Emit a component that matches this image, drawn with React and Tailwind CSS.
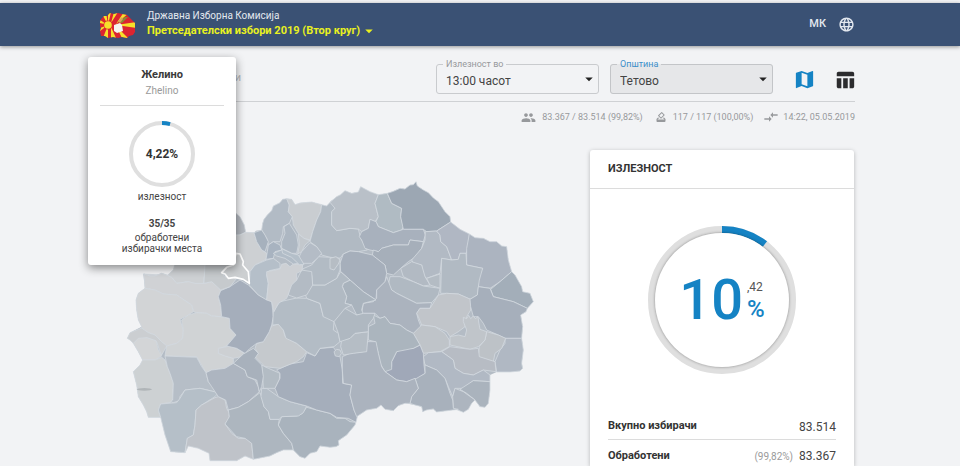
import { MdMap, MdTableChart, MdLanguage, MdPeople, MdHowToVote, MdCompareArrows, MdArrowDropDown } from "react-icons/md";

const OUTLINE =
  "280,150 318,130 330,140 343,165 347,187 372,188 378,182 395,180 398,160 402,148 412,135 425,122 430,108 450,98 458,88 470,86 485,88 495,104 510,99 545,96 575,104 590,108 605,92 620,80 632,74 645,62 665,70 685,66 692,50 720,65 745,74 772,70 790,64 810,55 825,57 840,45 850,44 858,35 862,48 880,60 895,68 910,84 925,95 945,125 960,140 962,156 990,178 1018,192 1035,203 1060,205 1080,215 1100,215 1115,228 1130,230 1135,270 1145,305 1155,315 1175,350 1178,365 1200,370 1210,395 1192,415 1188,425 1172,435 1178,470 1175,505 1180,540 1175,580 1178,595 1170,603 1140,606 1100,606 1080,615 1080,660 1075,700 1065,712 1050,710 1035,690 1025,700 1015,718 1000,727 985,718 920,726 910,717 890,720 878,725 875,710 855,705 825,700 805,707 790,722 765,718 753,705 740,715 710,720 680,740 675,765 650,795 625,812 627,825 618,830 600,832 570,828 560,845 540,850 525,865 510,860 490,840 460,840 440,848 420,858 370,868 345,858 320,872 240,872 237,850 205,835 175,828 165,848 122,845 105,795 92,742 55,742 50,725 40,705 25,680 20,645 10,605 30,585 38,570 25,545 10,520 0,510 -8,505 0,488 20,478 35,470 25,450 20,420 18,390 25,370 45,355 42,330 40,312 60,318 75,318 95,310 112,316 130,300 135,285 200,230";

const REGIONS = [
  ["#b1b6bd", "290,140 318,130 330,140 343,165 347,187 330,195 290,200"],
  ["#cdd0d3", "40,312 60,318 75,318 95,310 112,316 130,300 135,280 230,280 228,300 222,325 220,342 190,340 175,335 140,340 125,322 112,316"],
  ["#d0d2d5", "45,355 42,312 60,318 75,318 95,310 112,316 125,322 140,340 175,335 195,340 225,340 245,335 270,355 272,365 265,380 270,400 275,440 245,438 230,430 200,428 190,425 185,405 165,392 140,375 100,372 75,360"],
  ["#d2d4d6", "45,355 75,360 100,372 140,375 165,392 185,405 190,425 175,435 150,448 155,465 160,480 158,505 140,520 110,528 95,515 75,495 55,488 35,478 35,470 25,450 20,420 18,390 25,370"],
  ["#cbced1", "-8,505 0,488 20,480 35,474 55,488 75,495 95,515 110,528 95,555 90,545 80,515 50,503 10,520 0,510"],
  ["#d3d5d7", "10,520 25,505 50,503 78,512 85,540 95,558 75,570 38,570 25,545"],
  ["#cdd1d3", "38,570 75,570 95,562 105,570 112,590 120,610 130,640 128,690 122,697 92,702 85,720 92,742 55,742 50,725 40,705 25,680 20,645 10,605 30,585"],
  ["#d0d3d5", "110,528 140,520 158,505 160,480 155,450 175,435 200,428 230,430 245,438 270,440 298,445 300,475 318,495 290,528 270,535 265,550 310,565 310,580 285,595 245,600 228,608 215,585 200,560 105,558"],
  ["#cdd0d3", "265,535 300,528 320,535 342,550 335,560 310,565 285,558 265,550"],
  ["#b6bec7", "105,558 200,562 215,590 228,608 235,635 255,655 265,668 210,655 165,660 150,680 148,692 130,698 122,695 128,690 130,640 120,610 112,590"],
  ["#b5bfc8", "92,702 140,698 150,685 165,660 210,655 265,668 255,680 215,705 198,720 195,765 190,795 172,805 165,848 122,845 105,795 92,742 85,720"],
  ["#bfc3c9", "265,680 285,690 290,715 298,730 297,745 285,762 305,790 325,805 350,805 365,820 370,868 345,858 320,872 240,872 237,850 205,835 175,828 165,848 172,805 190,795 195,765 198,720 215,705 255,683"],
  ["#adb5c0", "228,608 245,600 285,595 310,580 345,600 352,620 375,630 385,650 388,665 355,695 325,712 295,720 287,690 265,680 255,665 245,650 235,635"],
  ["#adb6bf", "295,720 325,712 355,695 390,668 398,690 402,710 415,725 420,748 448,748 445,765 460,790 485,820 490,840 460,840 440,848 420,858 370,868 365,820 345,805 320,800 285,762 298,740"],
  ["#a9b3bd", "530,712 560,720 600,730 620,745 645,745 660,755 678,757 675,765 650,795 625,812 627,825 618,830 600,832 570,828 560,845 540,850 525,865 510,860 490,840 485,820 460,790 445,765 455,740 500,738 515,732"],
  ["#b5bec7", "395,655 410,655 445,680 480,695 530,708 520,728 505,738 455,740 448,748 420,748 415,725 402,710 393,680"],
  ["#b3bcc4", "395,585 415,595 450,610 448,628 435,655 400,655 398,620"],
  ["#a5aebb", "440,600 480,582 520,575 530,548 555,558 570,535 610,532 630,560 637,600 638,640 665,645 660,675 672,720 682,740 678,757 655,745 620,742 600,730 560,720 530,708 480,695 445,680 435,655 450,625 450,610"],
  ["#c5c9cd", "425,468 445,462 460,480 465,500 500,520 530,545 520,560 500,575 450,595 405,590 395,580 375,560 385,550 375,535 380,520 400,515 415,490"],
  ["#a8b1bc", "310,580 340,552 370,535 385,550 375,565 395,585 400,620 395,650 388,665 380,630 352,620 345,600"],
  ["#a5aebb", "330,330 355,345 385,375 425,395 428,420 430,440 425,465 418,485 400,515 380,520 360,535 345,550 320,535 290,528 318,495 300,475 298,445 275,440 272,405 265,380 272,362 300,350"],
  ["#b3bcc5", "430,425 450,395 500,384 530,385 570,400 580,440 600,440 612,455 610,480 625,490 630,515 612,530 570,535 555,558 530,545 500,520 468,505 460,480 445,463 428,465"],
  ["#c6cacd", "225,280 310,280 290,292 275,308 285,320 320,325 300,350 272,360 245,335 222,340"],
  ["#cdd0d3", "310,195 330,195 347,187 372,188 380,215 395,240 410,250 408,268 375,285 360,305 340,290 335,265 310,250"],
  ["#b2bbc5", "395,180 398,160 402,148 412,135 425,122 430,108 450,98 458,88 470,86 478,105 475,125 487,140 478,160 460,170 458,190 450,215 430,215 415,225 410,205"],
  ["#a6b1bd", "372,188 395,180 405,195 415,215 405,245 395,240 380,215"],
  ["#c9cdd1", "470,86 485,88 495,104 510,99 545,96 575,104 572,125 560,150 548,185 540,210 522,205 505,190 490,165 487,140 475,125 478,105"],
  ["#adb7c2", "478,160 500,195 505,225 500,250 485,250 455,235 455,215 465,190 462,170"],
  ["#c3c8cd", "505,192 522,205 540,212 525,225 515,245 503,252 508,225"],
  ["#a8b3c0", "415,225 430,215 450,225 455,240 435,245 430,265 408,268 412,245"],
  ["#b1bac3", "575,104 590,108 605,92 615,115 605,125 605,165 620,182 660,175 685,177 692,205 705,225 712,240 685,245 660,243 640,252 630,265 600,262 575,255 560,230 540,215 548,185 560,150 572,125"],
  ["#b9c0c8", "600,97 620,80 632,74 645,62 665,70 685,66 692,50 720,65 745,74 735,100 745,140 735,155 720,148 715,175 695,185 685,177 660,175 620,182 605,165 605,125 615,115"],
  ["#b0bbc3", "745,74 772,70 785,100 815,115 812,140 820,170 815,180 790,188 745,170 738,155 745,140 735,100"],
  ["#9ca7b3", "772,70 790,64 810,55 825,57 840,45 850,44 858,35 862,48 880,60 895,68 910,84 925,95 945,125 960,140 962,156 920,183 890,185 880,178 820,178 812,140 815,115 785,100"],
  ["#a8b1bd", "720,148 738,155 745,170 790,188 820,178 880,178 886,195 880,215 840,210 835,225 790,225 755,235 745,245 720,240 705,235 695,210 688,200 695,185 715,175"],
  ["#a6afba", "730,240 745,245 755,235 790,225 835,225 840,210 880,215 875,235 855,262 835,275 812,295 790,315 770,310 765,285 735,262 727,255"],
  ["#b2bac4", "886,185 920,183 930,195 932,215 950,230 965,270 935,265 930,310 890,325 880,315 875,285 850,280 845,270 875,235 885,210"],
  ["#b0b7c3", "962,156 990,178 1018,192 1015,235 1008,250 990,250 985,268 965,270 950,230 932,215 930,195 920,183"],
  ["#acb4c0", "1018,192 1035,203 1060,205 1080,215 1100,215 1115,228 1130,230 1135,270 1145,305 1110,335 1080,355 1045,350 1045,320 1058,295 1010,285 1010,235"],
  ["#a3aeb9", "1145,305 1155,315 1175,350 1178,365 1200,370 1210,395 1192,415 1150,395 1110,385 1090,380 1082,358 1110,335"],
  ["#b1bac3", "935,265 965,270 985,268 990,250 1008,250 1010,285 1058,295 1048,330 1042,375 1020,388 985,372 950,370 932,370"],
  ["#b2bac3", "812,295 845,275 875,285 885,320 900,345 880,348 850,335 820,320"],
  ["#b4bcc4", "890,325 930,312 930,355 900,345"],
  ["#b0b9c2", "780,320 810,320 850,335 880,348 930,355 925,375 905,398 860,400 830,385 800,370 785,360 775,345"],
  ["#a6afbb", "640,252 660,243 685,245 727,255 765,285 770,310 765,335 740,360 738,390 700,365 660,330 632,305 630,280"],
  ["#abb3be", "770,320 785,360 800,370 860,400 905,398 900,415 870,415 860,430 865,450 875,475 850,490 830,480 810,465 780,460 765,440 750,445 735,430 695,430 700,400 730,395 740,385 740,360 765,335"],
  ["#a9b3bd", "640,340 660,330 700,365 738,390 700,400 695,420 700,432 680,435 665,405 645,400 650,380 637,350"],
  ["#c1c5ca", "925,375 950,370 985,372 1022,388 1022,420 1010,440 1005,470 985,485 960,500 950,485 915,470 875,465 865,440 860,430 870,415 900,415"],
  ["#a6afbb", "1042,375 1045,350 1080,355 1090,380 1150,395 1192,415 1188,425 1172,435 1178,470 1175,505 1125,505 1105,495 1070,480 1060,460 1045,440 1030,440 1022,410 1020,388"],
  ["#b0b8c3", "1125,505 1175,505 1180,540 1175,580 1178,595 1170,603 1140,606 1100,606 1095,575 1110,540 1125,520"],
  ["#bdc2c7", "1070,485 1105,495 1127,505 1115,535 1095,550 1090,575 1070,570 1045,560 1048,530 1065,510"],
  ["#bfc4c9", "875,465 915,470 945,490 958,510 958,530 930,545 880,550 870,525 850,490"],
  ["#c0c5ca", "1000,442 1010,446 1016,436 1022,446 1030,438 1036,446 1044,440 1046,456 1050,478 1070,485 1065,510 1045,530 1020,538 960,525 960,500 985,495 1005,500 1010,480 1000,455"],
  ["#b7bcc4", "960,530 1020,538 1045,535 1048,560 1095,575 1098,605 1060,600 1030,615 1000,610 975,595 970,570 935,545"],
  ["#b1b9c4", "880,560 895,548 935,545 970,570 975,595 1000,610 1030,615 1060,600 1080,615 1080,635 1030,632 1000,655 975,655 968,680 955,650 945,625 920,600 885,585"],
  ["#aab3bd", "1080,635 1080,660 1075,700 1065,712 1050,710 1035,690 1010,670 990,658 1030,632"],
  ["#adb5bf", "975,655 1000,665 1035,690 1025,700 1015,718 1000,727 970,715 968,680"],
  ["#a8b1bc", "885,585 920,600 945,625 960,670 968,690 970,715 985,718 920,726 910,717 890,720 878,725 875,710 855,705 840,700 845,680 865,655 855,625 885,610"],
  ["#a0a8b8", "800,545 820,535 850,535 870,525 880,550 882,585 885,610 860,625 830,635 800,630 765,605 785,590 785,575"],
  ["#abb5be", "730,435 750,445 765,440 780,460 810,465 830,480 850,490 870,525 850,535 800,545 785,575 785,598 765,605 750,580 745,550 735,515 715,510 715,470 735,460"],
  ["#abb3be", "637,560 660,550 700,545 712,515 738,515 745,550 755,590 765,605 800,630 830,635 855,625 865,655 845,680 840,700 825,700 805,707 790,722 765,718 753,705 740,715 710,720 680,740 672,720 660,675 665,645 640,640 637,600"],
  ["#b5bdc5", "632,530 635,510 660,505 675,490 715,485 710,545 670,550 640,555"],
  ["#afb8c1", "612,455 625,430 645,415 680,435 700,430 735,430 730,445 715,465 715,485 675,490 660,505 630,515 625,490"],
  ["#b1bac3", "530,385 525,370 548,345 585,345 620,325 632,305 660,330 640,340 637,350 650,380 645,400 665,405 645,415 612,455 580,440 570,400"],
  ["#b2bbc4", "545,285 565,260 600,262 630,265 630,300 620,325 585,345 548,345 545,315 515,298"],
  ["#b3bbc4", "515,300 545,305 548,345 530,375 500,384 475,375 480,345 500,330"],
  ["#b4bcc6", "540,218 560,230 575,250 565,262 545,280 520,280 505,265 515,245"],
  ["#b5bfc9", "360,305 375,285 410,270 430,265 450,280 450,295 418,302 410,315 415,340 410,390 385,375 358,345"],
  ["#cdd0d4", "410,305 450,297 455,283 468,280 480,290 490,282 518,285 516,302 500,310 500,330 485,345 470,385 445,400 432,425 425,395 410,390 415,340 410,315"],
  ["#b1bcc7", "430,250 455,240 480,250 505,280 490,282 465,265 440,258"],
  ["#b4bfc9", "455,236 485,250 505,255 522,283 508,284 485,262 458,250"],
  ["#b6bdc4", "600,265 618,260 630,270 625,282 612,300 600,296"],
  ["#b6bec6", "612,545 620,538 630,540 634,550 628,560 616,558"],
];

const ZHELINO = "318,250 330,252 340,275 338,285 355,305 358,340 340,328 315,322 295,325 285,312 275,308 290,292 310,285";

function TurnoutMap() {
  return (
    <svg viewBox="0 0 1230 888" className="w-full overflow-visible" role="img" aria-label="Македонија">
      <polygon points={OUTLINE} fill="#b4bcc5" />
      <g stroke="#d3d9df" strokeWidth="2.4" strokeLinejoin="round">
        {REGIONS.map(([fill, points]) => (
          <polygon key={points} points={points} fill={fill} />
        ))}
      </g>
      <ellipse cx="43" cy="658" rx="23" ry="4" fill="#b0b5b8" />
      <polygon points={ZHELINO} fill="#cccfd1" stroke="#fff" strokeWidth="5" strokeLinejoin="round" />
    </svg>
  );
}

function Logo() {
  return (
    <svg viewBox="0 0 36 26" className="h-[26px] w-9" aria-hidden="true">
      <defs>
        <clipPath id="flag">
          <path d="M1 7L4 4l3 0 3-3 4 1 4-1 4 1 5 1 3 3 3 3 2 2v9l-2 3-4 1-2 2-5-1-4 1-5-1-5 1-3-2-4 0-1-5 1-3-2-3 1-3z" />
        </clipPath>
      </defs>
      <g clipPath="url(#flag)">
        <path fill="#dc2430" d="M0 0h36v26H0z" />
        <path
          fill="#f6e02a"
          d="M16 13L36 10v6zM16 12L24 0h6zM16 14L28 26h-6zM11 11L14 0h4zM11 15L16 26h-5zM8 13L1 0h5zM8 13L0 8v3zM8 13L0 16v3zM8 13L3 26h5zM8 13L8 0h3z"
        />
        <circle cx="8" cy="13" r="4.6" fill="#dc2430" />
        <circle cx="8" cy="13" r="3.8" fill="#f6e02a" />
      </g>
      <path fill="#f6f4f0" d="M14 13l6-2 2 2 1 6-6 2-3-2z" />
      <path fill="#8a8a35" d="M18 10l7-5 3 0-6 6z" />
      <path fill="#d9a25c" d="M18 9l4-4 1 2-3 4z" />
    </svg>
  );
}

function Ring({ size, width, value, className }) {
  const radius = (size - width) / 2;
  return (
    <svg viewBox={`0 0 ${size} ${size}`} className={className} aria-hidden="true">
      <circle cx={size / 2} cy={size / 2} r={radius} fill="none" stroke="#dfdfdf" strokeWidth={width} />
      <circle
        cx={size / 2}
        cy={size / 2}
        r={radius}
        fill="none"
        stroke="#1583c4"
        strokeWidth={width}
        pathLength="100"
        strokeDasharray={`${value} 100`}
        transform={`rotate(-90 ${size / 2} ${size / 2})`}
      />
    </svg>
  );
}

function OutlinedSelect({ id, label, value, active }) {
  return (
    <fieldset
      className={`relative h-9 w-[163px] rounded-[3px] border px-[6px] ${
        active ? "border-[#c3c5c8] bg-[#e6e7e9]" : "border-[#c9cbce]"
      }`}
    >
      <legend className={`h-3 px-[3px] text-[9px] leading-3 ${active ? "text-[#3d8fc9]" : "text-[#97999c]"}`}>
        <label htmlFor={id}>{label}</label>
      </legend>
      <select id={id} className="block h-[22px] w-full appearance-none bg-transparent pl-[3px] text-[12px] leading-5 text-[#444] outline-none">
        <option>{value}</option>
      </select>
      <MdArrowDropDown className="pointer-events-none absolute right-0 top-0 size-[18px] text-[#222]" />
    </fieldset>
  );
}

function Header() {
  return (
    <header className="relative mt-[3px] flex h-[43px] items-center bg-[#3a5174] pl-[100px] pr-[105px] shadow-[0_1px_4px_rgba(0,0,0,0.4)]">
      <Logo />
      <div className="ml-[11px] flex flex-col items-start">
        <span className="text-[10px] leading-3 text-[#e3e8ef]">Државна Изборна Комисија</span>
        <button className="flex items-center text-[11px] font-bold leading-[14px] text-[#e9f01f]">
          Претседателски избори 2019 (Втор круг)
          <MdArrowDropDown className="size-[18px]" />
        </button>
      </div>
      <button className="ml-auto flex items-center gap-3 text-[11px] font-medium text-[#e3e8ef]">
        МК
        <MdLanguage className="size-[17px]" />
      </button>
    </header>
  );
}

function MunicipalityPopup() {
  return (
    <aside className="absolute left-[88px] top-[57px] flex h-[208px] w-[148px] flex-col items-center rounded-[3px] bg-white px-3 pt-[10px] text-center text-[#444] shadow-[0_3px_10px_rgba(0,0,0,0.45)]">
      <h3 className="text-[11px] font-bold leading-4 text-[#3a3a3a]">Желино</h3>
      <p className="text-[10px] leading-4 text-[#9a9a9a]">Zhelino</p>
      <hr className="mt-[6px] w-full border-[#dcdcdc]" />
      <div className="mt-[15px] grid place-items-center">
        <Ring size={66} width={4} value={4.22} className="col-start-1 row-start-1 size-[66px]" />
        <strong className="col-start-1 row-start-1 text-[12px] font-bold leading-4 text-[#333]">4,22%</strong>
      </div>
      <p className="mt-1 text-[10px] leading-3">излезност</p>
      <strong className="mt-[15px] text-[10px] font-bold leading-3">35/35</strong>
      <p className="mt-[2px] text-[10px] leading-[11px]">
        обработени
        <br />
        избирачки места
      </p>
    </aside>
  );
}

function TurnoutCard() {
  return (
    <section className="w-[264px] shrink-0 rounded-t-[3px] bg-white text-[#333] shadow-[0_1px_4px_rgba(0,0,0,0.25)]">
      <h2 className="h-[39px] border-b border-[#dcdcdc] px-[18px] text-[11px] font-bold leading-[38px]">ИЗЛЕЗНОСТ</h2>
      <div className="mt-[37px] grid place-items-center">
        <Ring size={148} width={7} value={10.42} className="col-start-1 row-start-1 size-[148px]" />
        <div className="col-start-1 row-start-1 flex size-[134px] items-center justify-center gap-1 rounded-full bg-white shadow-[0_0_3px_rgba(0,0,0,0.4)]">
          <span className="text-[56px] font-medium leading-none text-[#1583c4]">10</span>
          <span className="flex flex-col">
            <span className="text-[12px] leading-[18px] text-[#555]">,42</span>
            <span className="text-[24px] font-medium leading-[26px] text-[#1583c4]">%</span>
          </span>
        </div>
      </div>
      <dl className="mx-[18px] mt-10">
        <div className="flex h-[26px] items-center justify-between border-b border-[#dcdcdc]">
          <dt className="text-[11px] font-bold">Вкупно избирачи</dt>
          <dd className="text-[12px] text-[#444]">83.514</dd>
        </div>
        <div className="flex h-[26px] items-center justify-between pt-[6px]">
          <dt className="text-[11px] font-bold">Обработени</dt>
          <dd className="flex items-center gap-[6px] text-[12px] text-[#444]">
            <span className="text-[10px] text-[#9a9a9a]">(99,82%)</span>
            83.367
          </dd>
        </div>
      </dl>
    </section>
  );
}

export default function App() {
  return (
    <div className="flex min-h-screen flex-col bg-[#f2f3f5] font-[Roboto,sans-serif]">
      <Header />
      <div className="ml-[100px] mr-[105px] flex h-[56px] items-end border-b border-[#cfd1d4] pb-[7px]">
        <h1 className="w-[141px] pb-2 text-right text-[11px] leading-4 text-[#b4b6b9]">и</h1>
        <div className="ml-auto flex items-end">
          <OutlinedSelect id="time" label="Излезност во" value="13:00 часот" />
          <div className="ml-[11px]">
            <OutlinedSelect id="municipality" label="Општина" value="Тетово" active />
          </div>
          <button aria-label="Мапа" className="mb-[3px] ml-5 text-[#1583c4]">
            <MdMap className="size-[23px]" />
          </button>
          <button aria-label="Табела" className="-mr-px mb-[3px] ml-[18px] text-[#2c2c2e]">
            <MdTableChart className="size-[22px]" />
          </button>
        </div>
      </div>
      <div className="mr-[105px] flex h-[30px] items-center justify-end text-[9px] leading-3 text-[#97999c]">
        <MdPeople className="mr-[6px] size-[15px]" />
        83.367 / 83.514 (99,82%)
        <MdHowToVote className="ml-3 mr-[6px] size-3" />
        117 / 117 (100,00%)
        <MdCompareArrows className="ml-[10px] mr-1 size-4" />
        14:22, 05.05.2019
      </div>
      <main className="mr-[106px] flex grow justify-between pl-[130px] pt-[18px]">
        <div className="w-[410px] pt-5">
          <TurnoutMap />
        </div>
        <TurnoutCard />
      </main>
      <MunicipalityPopup />
    </div>
  );
}
